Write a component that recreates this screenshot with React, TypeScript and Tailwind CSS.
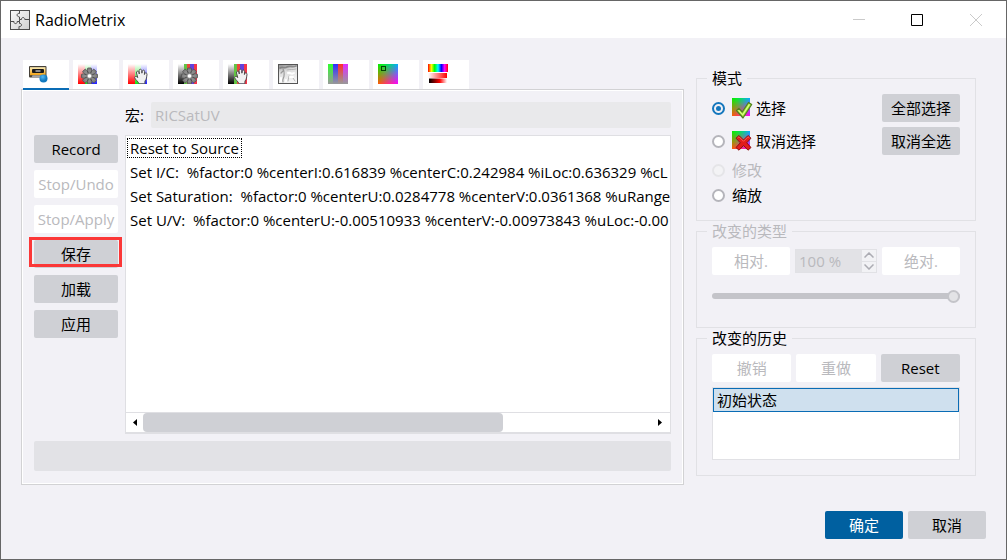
import React from "react";

const font = "font-['Open_Sans','Noto_Sans_CJK_SC',sans-serif]";
const base = "flex h-7 items-center justify-center rounded-xs text-[15px] whitespace-nowrap";
const solid = base + " bg-[#cfd0d5] text-black";
const faded = base + " bg-white text-[#b9b9bd]";

type ButtonProps = { children: React.ReactNode; disabled?: boolean; className?: string };

function Button({ children, disabled, className = "" }: ButtonProps) {
  return (
    <button type="button" disabled={disabled} className={(disabled ? faded : solid) + " " + className}>
      {children}
    </button>
  );
}

function PuzzleIcon() {
  return (
    <svg viewBox="0 0 20 20" className="size-5" fill="none" stroke="#4b4b4b">
      <defs>
        <linearGradient id="puzzle" x1="0" y1="0" x2="1" y2="1">
          <stop offset="0" stopColor="#fafafa" />
          <stop offset="1" stopColor="#d0d0d0" />
        </linearGradient>
      </defs>
      <rect x=".5" y=".5" width="19" height="19" fill="url(#puzzle)" />
      <path d="M9.500 1v2.500c-2.600-.8-3.400 2.800-.8 3.200l.8.300v2.500h2c-.4-2.600 3.600-2.600 3.300 0h4.200M1 11.500h3c-.6 2.800 3.600 2.800 3.200 0h2.300v2c2.600-.4 2.800 3 .2 3h-.7V19M9.500 11.500V9.500" />
    </svg>
  );
}

function RecorderIcon() {
  return (
    <svg viewBox="0 0 20 20" className="size-5">
      <defs>
        <linearGradient id="tape" x1="0" y1="0" x2="0" y2="1">
          <stop offset="0" stopColor="#fff0b8" />
          <stop offset="1" stopColor="#f0a010" />
        </linearGradient>
        <radialGradient id="rec" cx=".4" cy=".3">
          <stop offset="0" stopColor="#55b9f2" />
          <stop offset="1" stopColor="#1078be" />
        </radialGradient>
      </defs>
      <rect x="1" y="2" width="17.500" height="11.500" rx="1" fill="#454038" />
      <rect x="2" y="3.200" width="15.500" height="8" fill="url(#tape)" />
      <rect x="4" y="5" width="12" height="4" rx="1" fill="#191919" />
      <rect x="7.500" y="6" width="5" height="2" fill="#8c8c8c" />
      <path d="M4.500 11.200h10l1 2.300H3.500z" fill="#a5a5a5" />
      <circle cx="15.500" cy="14.500" r="4" fill="url(#rec)" />
    </svg>
  );
}

function Gear() {
  const angles = [0, 45, 90, 135, 180, 225, 270, 315];
  return (
    <g transform="translate(11.5 12)">
      {angles.map((a) => (
        <rect key={a} x="-2" y="-8" width="4" height="4" rx=".6" transform={"rotate(" + a + ")"} fill="#808080" stroke="#505050" strokeWidth=".8" />
      ))}
      <circle r="6.200" fill="#8c8c8c" />
      {angles.map((a) => (
        <path key={a} d="M0-3v-3" transform={"rotate(" + (a + 22) + ")"} stroke="#4c4c4c" />
      ))}
      <circle r="2.800" fill="#aaa" stroke="#666" strokeWidth=".6" />
      <circle r="1.800" fill="#fff" />
    </g>
  );
}

function Hand() {
  return (
    <path
      d="M11 19.800c-.3-2-3.800-4.200-4.300-6-.3-1.700 1.800-1.900 3.100-.2L8.500 9c-.4-2 1.700-2.500 2.300-.8l.5 1.800-.2-3.400c0-1.800 2.400-1.900 2.600 0l.2 2.600.4-2c.4-1.700 2.500-1.300 2.300.4l-.2 2.900.3-.8c.7-1.400 2.600-.8 2.300.8-.4 2.300-.3 4.800-2 6.500l-.2 2.800z"
      fill="#f1f1f1"
      stroke="#444"
      strokeWidth=".9"
    />
  );
}

function LightStripes({ id }: { id: string }) {
  return (
    <>
      <defs>
        <linearGradient id={id} x1="0" y1="0" x2="0" y2="1">
          <stop offset="0" stopColor="#fff" />
          <stop offset="1" stopColor="#fff" stopOpacity="0" />
        </linearGradient>
      </defs>
      <path fill="#ff0000" d="M0 0h7v20H0z" />
      <path fill="#12e312" d="M7 0h6v20H7z" />
      <path fill="#2020ff" d="M13 0h6v20h-6z" />
      <path fill={"url(#" + id + ")"} d="M0 0h20v20H0z" />
    </>
  );
}

function DarkStripes({ id }: { id: string }) {
  return (
    <>
      <defs>
        <linearGradient id={id} x1="0" y1="0" x2="0" y2="1">
          <stop offset="0" stopColor="#fff" />
          <stop offset="1" stopColor="#000" />
        </linearGradient>
      </defs>
      <path fill={"url(#" + id + ")"} d="M0 0h6v20H0z" />
      <path fill="#63c344" d="M6 0h3v20H6z" />
      <path fill="#ed443c" d="M9 0h3v20H9z" />
      <path fill="#6340dc" d="M12 0h4v20h-4z" />
      <path fill="#f33549" d="M16 0h3v20h-3z" />
    </>
  );
}

function TextureIcon() {
  return (
    <svg viewBox="0 0 20 20" className="size-5">
      <defs>
        <linearGradient id="shade" x1="0" y1="0" x2=".3" y2="1">
          <stop offset="0" stopColor="#8c8c8c" />
          <stop offset=".4" stopColor="#dcdcdc" />
          <stop offset="1" stopColor="#f4f4f4" />
        </linearGradient>
      </defs>
      <rect x=".5" y=".5" width="19" height="19" fill="url(#shade)" />
      <g fill="none" strokeLinecap="round">
        <path d="M2 4c3-2 4 1 7-1s5 1 9-1" stroke="#6f6f6f" strokeWidth="1.800" opacity=".7" />
        <path d="M5 5c2 3 1 5 1 7s-2 3-1 6M3 9l2-2" stroke="#888" strokeWidth="1.200" opacity=".8" />
        <path d="M9 6c3-1 6 0 9-1M11 12l-1 5M15 14l2 3" stroke="#aaa" opacity=".8" />
        <path d="M10 9c3-1 3 2 6 0M12 13h3M8 16v1M3 14v3" stroke="#fff" strokeWidth="2" />
      </g>
      <rect x=".5" y=".5" width="19" height="19" fill="none" stroke="#555" />
    </svg>
  );
}

function BarsIcon() {
  return (
    <svg viewBox="0 0 20 20" className="size-5">
      <defs>
        <linearGradient id="grey" x1="0" y1="0" x2="0" y2="1">
          <stop offset="0" stopColor="#999" stopOpacity="0" />
          <stop offset="1" stopColor="#999" />
        </linearGradient>
      </defs>
      <path fill="#2dff2d" d="M0 0h5v20H0z" />
      <path fill="#2d2dff" d="M5 0h5v20H5z" />
      <path fill="#ff2d2d" d="M10 0h5v20h-5z" />
      <path fill="#e02dff" d="M15 0h5v20h-5z" />
      <path fill="url(#grey)" d="M0 0h20v20H0z" />
    </svg>
  );
}

function ColorSquare({ id }: { id: string }) {
  return (
    <>
      <defs>
        <linearGradient id={id + "t"}>
          <stop offset="0" stopColor="#00f000" />
          <stop offset=".3" stopColor="#00f030" />
          <stop offset="1" stopColor="#00b0ff" />
        </linearGradient>
        <linearGradient id={id + "b"}>
          <stop offset="0" stopColor="#ff5a00" />
          <stop offset="1" stopColor="#ff00ff" />
        </linearGradient>
        <linearGradient id={id + "f"} x1="0" y1="0" x2="0" y2="1">
          <stop offset="0" stopColor="#000" />
          <stop offset="1" stopColor="#fff" />
        </linearGradient>
        <mask id={id + "m"}>
          <rect width="20" height="20" fill={"url(#" + id + "f)"} />
        </mask>
      </defs>
      <rect width="20" height="20" fill={"url(#" + id + "t)"} />
      <rect width="20" height="20" fill={"url(#" + id + "b)"} mask={"url(#" + id + "m)"} />
    </>
  );
}

function RampsIcon() {
  return (
    <svg viewBox="0 0 20 20" className="size-5">
      <defs>
        <linearGradient id="hue">
          <stop offset="0" stopColor="#ff0000" />
          <stop offset=".17" stopColor="#ffff00" />
          <stop offset=".33" stopColor="#00ff00" />
          <stop offset=".5" stopColor="#00ffff" />
          <stop offset=".67" stopColor="#0000ff" />
          <stop offset=".83" stopColor="#ff00ff" />
          <stop offset="1" stopColor="#ff0000" />
        </linearGradient>
        <linearGradient id="tint">
          <stop offset="0" stopColor="#fff" />
          <stop offset="1" stopColor="#f00" />
        </linearGradient>
        <linearGradient id="tone">
          <stop offset="0" stopColor="#000" />
          <stop offset=".6" stopColor="#f00" />
          <stop offset="1" stopColor="#fff" />
        </linearGradient>
      </defs>
      <path fill="url(#hue)" d="M0 0h20v8H0z" />
      <path fill="url(#tint)" d="M0 9h19v5H0z" />
      <path fill="url(#tone)" d="M1 14.500h18v4.500H1z" />
    </svg>
  );
}

const tabs = [
  { name: "Macro", icon: <RecorderIcon /> },
  { name: "RGB automatic", icon: <svg viewBox="0 0 20 20" className="size-5"><LightStripes id="l1" /><Gear /></svg> },
  { name: "RGB manual", icon: <svg viewBox="0 0 20 20" className="size-5"><LightStripes id="l2" /><Hand /></svg> },
  { name: "Intensity automatic", icon: <svg viewBox="0 0 20 20" className="size-5"><DarkStripes id="d1" /><Gear /></svg> },
  { name: "Intensity manual", icon: <svg viewBox="0 0 20 20" className="size-5"><DarkStripes id="d2" /><Hand /></svg> },
  { name: "Texture", icon: <TextureIcon /> },
  { name: "Saturation", icon: <BarsIcon /> },
  {
    name: "Color plane",
    icon: (
      <svg viewBox="0 0 20 20" className="size-5">
        <ColorSquare id="plane" />
        <rect x="3.500" y="2.500" width="4" height="4" fill="none" stroke="#063f06" />
      </svg>
    ),
  },
  { name: "Color ramps", icon: <RampsIcon /> },
];

const steps = [
  "Set I/C:  %factor:0 %centerI:0.616839 %centerC:0.242984 %iLoc:0.636329 %cL",
  "Set Saturation:  %factor:0 %centerU:0.0284778 %centerV:0.0361368 %uRange:",
  "Set U/V:  %factor:0 %centerU:-0.00510933 %centerV:-0.00973843 %uLoc:-0.00",
];

function MacroPanel() {
  return (
    <section className="min-w-0 flex-1">
      <div role="tablist" className="flex gap-1 pl-0.5">
        {tabs.map((tab, i) => (
          <button
            key={tab.name}
            type="button"
            role="tab"
            aria-label={tab.name}
            aria-selected={i === 0}
            className={
              i === 0
                ? "relative z-10 -mb-px flex h-[30px] w-[46px] border-b-2 border-[#0a6cb5] bg-white pt-1 pl-[5px]"
                : "flex h-[29px] w-[46px] bg-white pt-1 pl-[5px]"
            }
          >
            {tab.icon}
          </button>
        ))}
      </div>
      <div className="border border-[#d2d2d4] bg-white p-px">
        <div className="bg-[#f2f1f6] px-[11px] pt-[11px] pb-3">
          <div className="flex items-center gap-[7px] pl-[91px]">
            <label htmlFor="macro" className="text-[15px]">宏:</label>
            <input
              id="macro"
              disabled
              defaultValue="RICSatUV"
              className="h-[26px] min-w-0 flex-1 rounded-xs bg-[#e9e9eb] px-1 text-[15px] text-[#b9b9bd]"
            />
          </div>
          <div className="mt-[7px] flex gap-[7px]">
            <div className="flex w-[84px] flex-col gap-[7px]">
              <Button>Record</Button>
              <Button disabled>Stop/Undo</Button>
              <Button disabled>Stop/Apply</Button>
              <div className="relative">
                <Button className="w-full">保存</Button>
                <span className="pointer-events-none absolute -top-[3px] -right-1 bottom-px -left-[5px] border-3 border-[#fb3737]" />
              </div>
              <Button>加载</Button>
              <Button>应用</Button>
            </div>
            <div className="flex h-[299px] min-w-0 flex-1 flex-col border border-[#dfdfe3] bg-white">
              <ul className="flex-1 overflow-hidden pl-px text-[15px] leading-6 whitespace-pre">
                <li className="flex h-6 items-center">
                  <span className="border border-dotted border-black px-0.5 leading-[18px]">Reset to Source</span>
                </li>
                {steps.map((step) => (
                  <li key={step} className="h-6 pl-[3px]">{step}</li>
                ))}
              </ul>
              <div className="flex h-[21px] border-y border-[#dfdfe3]">
                <button type="button" aria-label="Scroll left" className="flex w-[17px] items-center justify-center">
                  <svg viewBox="0 0 4 7" className="h-[7px] w-1"><path d="M4 0v7L0 3.500z" /></svg>
                </button>
                <div className="flex-1">
                  <div className="h-full w-[71%] rounded-sm bg-[#cfd0d5]" />
                </div>
                <button type="button" aria-label="Scroll right" className="flex w-5 items-center justify-center">
                  <svg viewBox="0 0 4 7" className="h-[7px] w-1"><path d="M0 0v7l4-3.500z" /></svg>
                </button>
              </div>
            </div>
          </div>
          <div className="mt-[7px] h-[30px] rounded-xs bg-[#e2e2e6]" />
        </div>
      </div>
    </section>
  );
}

function Group({ title, disabled, className, children }: { title: string; disabled?: boolean; className: string; children: React.ReactNode }) {
  return (
    <fieldset className={"min-w-0 border border-[#e1e1e5] px-[15px] " + className}>
      <legend className={"-ml-[5px] px-[5px] text-[15px] leading-5 " + (disabled ? "text-[#b9b9bd]" : "")}>{title}</legend>
      {children}
    </fieldset>
  );
}

function Radio({ id, label, checked, disabled, icon }: { id: string; label: string; checked?: boolean; disabled?: boolean; icon?: React.ReactNode }) {
  return (
    <div className="flex flex-1 items-center">
      <input
        id={id}
        type="radio"
        name="mode"
        defaultChecked={checked}
        disabled={disabled}
        className="mr-[7px] size-[13px] appearance-none rounded-full border-2 border-[#b5b5bb] bg-white checked:border-[#1477bd] checked:bg-[#1477bd] checked:bg-clip-content checked:p-0.5 disabled:border-[#e5e5e8] disabled:bg-[#f3f3f5]"
      />
      <label htmlFor={id} className={"flex items-center gap-[3px] text-[15px] leading-5 " + (disabled ? "text-[#b9b9bd]" : "")}>
        {icon}
        {label}
      </label>
    </div>
  );
}

const checkIcon = (
  <svg viewBox="0 0 21 21" className="size-[21px]">
    <g transform="scale(.9)"><ColorSquare id="sel" /></g>
    <path d="M4.500 12.500l2.500-2.200 3.200 3.700L16.500 4.500l3.200 2-8.700 13.500z" fill="#9be030" stroke="#4f8020" strokeWidth="1.200" strokeLinejoin="round" />
    <path d="M6.500 12.300l4.200 4.500L17.500 6.300" fill="none" stroke="#dcff88" strokeWidth="1.200" />
  </svg>
);

const crossIcon = (
  <svg viewBox="0 0 21 21" className="size-[21px]">
    <g transform="scale(.9)"><ColorSquare id="desel" /></g>
    <path d="M7 4.500l4.500 4.500L16 4.500l3 2.700-4.300 4.600 4.300 4.700-3 2.700-4.500-4.700L7 19.200l-3-2.700 4.300-4.700L4 7.200z" fill="#e21b1b" stroke="#8b1010" strokeLinejoin="round" />
    <path d="M5.500 7L7 5.800l4.500 4.500L16 5.800 17.500 7" fill="none" stroke="#ff6b5b" strokeWidth=".8" />
  </svg>
);

function Sidebar() {
  return (
    <aside className="w-[280px] pt-2">
      <Group title="模式" className="h-[153px]">
        <div className="grid grid-cols-[1fr_78px] gap-y-[5px] pt-1.5">
          <Radio id="select" label="选择" checked icon={checkIcon} />
          <Button>全部选择</Button>
          <Radio id="deselect" label="取消选择" icon={crossIcon} />
          <Button>取消全选</Button>
        </div>
        <div className="mt-[5px] flex flex-col gap-[5px]">
          <Radio id="modify" label="修改" disabled />
          <Radio id="zoom" label="缩放" />
        </div>
      </Group>
      <Group title="改变的类型" disabled className="h-[107px]">
        <div className="flex items-center gap-[5px] pt-1.5">
          <Button disabled className="w-[78px]">相对.</Button>
          <div className="flex h-6 min-w-0 flex-1 border border-[#e1e1e5] bg-[#e2e2e6]">
            <input aria-label="Amount" disabled defaultValue="100 %" className="w-0 min-w-0 flex-1 pl-[3px] text-[15px] text-[#b9b9bd]" />
            <div className="flex w-3.5 flex-col gap-px bg-[#e2e2e6]">
              <button type="button" disabled aria-label="Increase" className="flex flex-1 items-center justify-center bg-[#f2f2f5]">
                <svg viewBox="0 0 10 6" className="h-1.5 w-2.5" fill="none" stroke="#acacb3" strokeWidth="1.500"><path d="M.5 5.500L5 1l4.500 4.500" /></svg>
              </button>
              <button type="button" disabled aria-label="Decrease" className="flex flex-1 items-center justify-center bg-[#f2f2f5]">
                <svg viewBox="0 0 10 6" className="h-1.5 w-2.5" fill="none" stroke="#acacb3" strokeWidth="1.500"><path d="M.5.500L5 5 9.500.500" /></svg>
              </button>
            </div>
          </div>
          <Button disabled className="w-[78px]">绝对.</Button>
        </div>
        <input
          type="range"
          aria-label="Strength"
          disabled
          defaultValue={100}
          className="mt-3.5 block h-[13px] w-full appearance-none bg-transparent [&::-webkit-slider-runnable-track]:h-1.5 [&::-webkit-slider-runnable-track]:rounded-sm [&::-webkit-slider-runnable-track]:bg-[#c4c4c9] [&::-webkit-slider-thumb]:-mt-[3px] [&::-webkit-slider-thumb]:size-[13px] [&::-webkit-slider-thumb]:appearance-none [&::-webkit-slider-thumb]:rounded-full [&::-webkit-slider-thumb]:border-2 [&::-webkit-slider-thumb]:border-[#c4c4c9] [&::-webkit-slider-thumb]:bg-[#e3e3e6]"
        />
      </Group>
      <Group title="改变的历史" className="h-[148px]">
        <div className="grid grid-cols-3 gap-[5px] pt-1.5">
          <Button disabled>撤销</Button>
          <Button disabled>重做</Button>
          <Button>Reset</Button>
        </div>
        <ul className="mt-[5px] h-[73px] border border-[#e1e1e5] bg-white">
          <li className="flex h-6 items-center border border-[#0a6cb5] bg-[#cfe0ee] px-[3px] text-[15px]">初始状态</li>
        </ul>
      </Group>
    </aside>
  );
}

export default function App() {
  return (
    <main className={"min-h-screen border border-[#666666] bg-[#f2f1f6] text-black " + font}>
      <header className="flex h-[37px] items-center bg-white pl-[9px]">
        <PuzzleIcon />
        <h1 className="ml-[5px] flex-1 text-base">RadioMetrix</h1>
        <button type="button" aria-label="Minimize" disabled className="flex w-[58px] justify-center">
          <svg viewBox="0 0 12 12" className="size-3" stroke="#cacaca"><path d="M0 5.500h12" /></svg>
        </button>
        <button type="button" aria-label="Maximize" className="flex w-[58px] justify-center">
          <svg viewBox="0 0 12 12" className="size-3" fill="none" stroke="#000"><path d="M.5.500h11v11H.500z" /></svg>
        </button>
        <button type="button" aria-label="Close" disabled className="flex w-[60px] justify-center">
          <svg viewBox="0 0 12 12" className="size-3" stroke="#cacaca"><path d="M0 0l12 12M12 0L0 12" /></svg>
        </button>
      </header>
      <div className="flex items-start gap-3 pt-[22px] pr-[30px] pl-5">
        <MacroPanel />
        <Sidebar />
      </div>
      <footer className="flex justify-end gap-[5px] pt-[26px] pr-5 pb-5">
        <button type="button" className="flex h-7 w-[78px] items-center justify-center rounded-xs bg-[#0060a0] text-[15px] text-white">确定</button>
        <Button className="w-[78px]">取消</Button>
      </footer>
    </main>
  );
}
